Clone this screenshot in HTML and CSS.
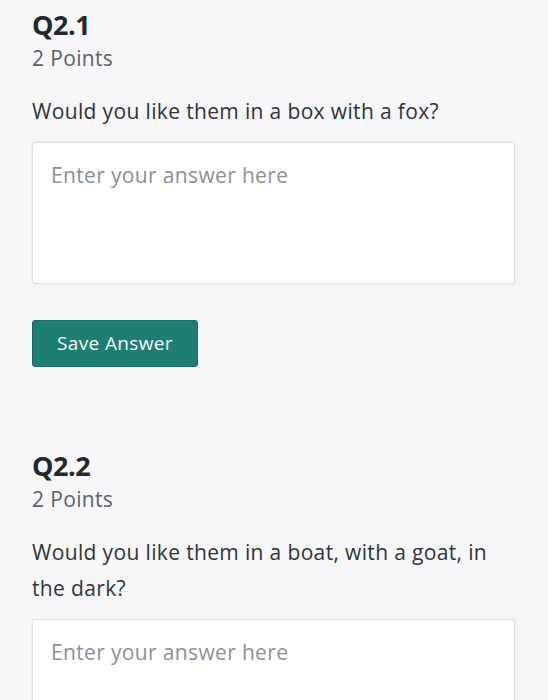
FILE: index.html
```html
<!DOCTYPE html>
<html lang="en">
<head>
<meta charset="utf-8">
<title>Questions</title>
<link rel="stylesheet" href="styles.css">
</head>
<body>
<main class="page">
  <section class="question">
    <h2 class="q-title">Q2.1</h2>
    <div class="q-points">2 Points</div>
    <p class="q-text">Would you like them in a box with a fox?</p>
    <textarea class="answer" placeholder="Enter your answer here"></textarea>
    <button class="save-btn" type="button">Save Answer</button>
  </section>
  <section class="question">
    <h2 class="q-title">Q2.2</h2>
    <div class="q-points">2 Points</div>
    <p class="q-text">Would you like them in a boat, with a goat, in the dark?</p>
    <textarea class="answer" placeholder="Enter your answer here"></textarea>
  </section>
</main>
</body>
</html>
```
FILE: styles.css
```css
html, body {
  margin: 0;
  padding: 0;
}
body {
  background: #f7f7f9;
  font-family: "Open Sans", Lato, sans-serif;
  letter-spacing: 0.35px;
  color: #2f3437;
  overflow: hidden;
}
.page {
  padding: 0 33px 0 32px;
}
.question {
  display: flex;
  flex-direction: column;
  align-items: flex-start;
  padding-top: 8px;
}
.question + .question {
  margin-top: 74px;
}
.q-title {
  margin: 0;
  font-size: 27px;
  line-height: 34px;
  font-weight: 700;
  letter-spacing: -0.5px;
  color: #1f2a2c;
}
.q-points {
  margin-top: 1px;
  font-size: 21px;
  line-height: 30px;
  color: #5d6266;
}
.q-text {
  margin: 20px 0 0;
  font-size: 21px;
  line-height: 36px;
  color: #2f3437;
}
.answer {
  box-sizing: border-box;
  align-self: stretch;
  margin-top: 13px;
  height: 142px;
  padding: 17px 18px;
  border: 1px solid #dfe0e3;
  border-radius: 3px;
  background: #ffffff;
  font-family: inherit;
  font-size: 21px;
  line-height: 30px;
  letter-spacing: inherit;
  color: #2f3437;
  resize: none;
  box-shadow: 0 0 0 1px #eeeff1;
}
.answer::placeholder {
  color: #8d9094;
}
.save-btn {
  box-sizing: border-box;
  margin-top: 36px;
  width: 166px;
  height: 47px;
  padding: 0;
  border: 1px solid #176b62;
  border-radius: 3px;
  background: #1e7e73;
  color: #f4fbfa;
  font-family: inherit;
  font-size: 19px;
  letter-spacing: inherit;
  line-height: 1;
}
```
